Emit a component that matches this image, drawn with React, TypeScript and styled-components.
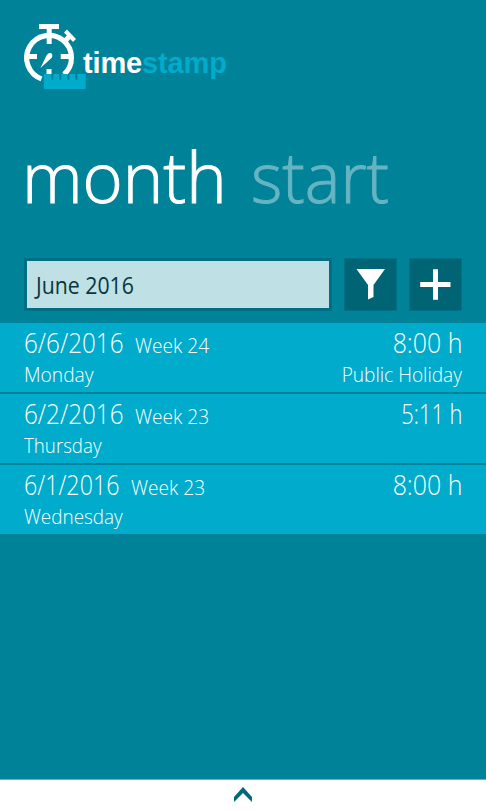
import React from "react";
import styled, { createGlobalStyle } from "styled-components";

const GlobalStyle = createGlobalStyle`
  *, *::before, *::after { box-sizing: border-box; }
  body { margin: 0; }
`;

const Screen = styled.main`
  display: flex;
  flex-direction: column;
  width: 486px;
  height: 810px;
  overflow: hidden;
  background: #008299;
  color: #fff;
  font-family: "Open Sans", "Noto Sans", sans-serif;
  font-weight: 300;
`;

/* Condensed run of text; $squeeze is the horizontal scale. */
const Text = styled.span<{ $size: number; $squeeze?: number; $weight?: number; $end?: boolean }>`
  display: block;
  white-space: pre;
  font-size: ${(p) => p.$size}px;
  font-weight: ${(p) => p.$weight ?? 300};
  transform: scaleX(${(p) => p.$squeeze ?? 1});
  transform-origin: ${(p) => (p.$end ? "right" : "left")} center;
`;

const Brand = styled.header`
  display: flex;
  height: 96px;
  padding: 20px 0 0 20px;
`;

const Wordmark = styled.div`
  margin: 26px 0 0 -7px;
  font: 700 29px/34px "Liberation Sans", sans-serif;
  letter-spacing: -0.15px;
`;

const Accent = styled.span`
  color: #00abcb;
`;

const Tabs = styled.nav`
  display: flex;
  height: 162px;
  padding: 31px 0 0 22px;
  line-height: 98px;
`;

const Tab = styled.div<{ $width: number; $muted?: boolean }>`
  width: ${(p) => p.$width}px;
  color: ${(p) => (p.$muted ? "#66b4c2" : "#fff")};
  -webkit-text-stroke: 1px currentColor;
`;

const Toolbar = styled.div`
  display: flex;
  gap: 12px;
  height: 65px;
  padding: 0 24px;
`;

const MonthField = styled.div`
  display: flex;
  align-items: center;
  width: 308px;
  height: 53px;
  padding-left: 9px;
  border: 3px solid #006f83;
  background: #bfe0e5;
  color: #08363f;
`;

const IconButton = styled.button`
  width: 53px;
  height: 53px;
  padding: 0;
  border: 1px solid #007085;
  background: #006475;

  svg { display: block; }
`;

const List = styled.div`
  display: flex;
  flex-direction: column;
  gap: 2px;
`;

const Row = styled.div`
  display: flex;
  justify-content: space-between;
  height: 69px;
  padding: 1px 24px 0;
  background: #00abcb;
`;

const Column = styled.div<{ $end?: boolean }>`
  display: flex;
  flex-direction: column;
  align-items: ${(p) => (p.$end ? "flex-end" : "flex-start")};
`;

const Line = styled.div<{ $height: number }>`
  display: flex;
  height: ${(p) => p.$height}px;
  line-height: 36px;
`;

const DateSlot = styled.div<{ $width: number }>`
  width: ${(p) => p.$width}px;
`;

const WeekSlot = styled.div`
  padding-top: 4px;
`;

const AppBar = styled.footer`
  display: flex;
  justify-content: center;
  height: 31px;
  margin-top: auto;
  border-top: 1px solid #66b4c2;
  background: #fff;
`;

const Logo = () => (
  <svg width="70" height="74" viewBox="20 20 70 74">
    <g fill="none" stroke="#fff">
      <path d="M41.500 78.900A22.400 22.400 0 1 1 64 74.500" strokeWidth="5.200" />
      <path d="M39 26.500H59M49.200 27V44" strokeWidth="5" />
      <path d="M65.500 31L74.500 40.500" strokeWidth="4" />
      <path d="M70 35.700L65.500 40.500" strokeWidth="5" />
      <path d="M29 56.500H37M60.700 56.500H70" strokeWidth="5" />
    </g>
    <path d="M50.500 53C52.500 53.500 53 56 51.500 58L40.500 68L46.500 55.500C47.800 53.300 49.500 52.700 50.500 53Z" fill="#fff" />
    <path d="M46.500 69H51.500V74H46.500Z" fill="#fff" />
    <path d="M43.700 74H51.300V80H53.300V74H59.300V80H61.300V74H67.300V80H69.300V74H75.300V80H77.300V74H85.700V89H43.700Z" fill="#00abcb" />
  </svg>
);

interface Entry {
  date: string;
  dateWidth: number;
  squeeze: number;
  week: string;
  day: string;
  daySqueeze: number;
  hours: string;
  hoursSqueeze: number;
  note?: string;
}

const entries: Entry[] = [
  { date: "6/6/2016", dateWidth: 111, squeeze: 0.865, week: "Week 24", day: "Monday", daySqueeze: 0.96, hours: "8:00 h", hoursSqueeze: 0.89, note: "Public Holiday" },
  { date: "6/2/2016", dateWidth: 111, squeeze: 0.865, week: "Week 23", day: "Thursday", daySqueeze: 0.935, hours: "5:11 h", hoursSqueeze: 0.78 },
  { date: "6/1/2016", dateWidth: 107, squeeze: 0.83, week: "Week 23", day: "Wednesday", daySqueeze: 0.945, hours: "8:00 h", hoursSqueeze: 0.89 },
];

export default function App() {
  return (
    <>
      <GlobalStyle />
      <Screen>
        <Brand>
          <Logo />
          <Wordmark>time<Accent>stamp</Accent></Wordmark>
        </Brand>
        <Tabs>
          <Tab $width={229}><Text $size={70} $squeeze={0.98}>month</Text></Tab>
          <Tab $width={150} $muted><Text $size={70} $squeeze={0.96}>start</Text></Tab>
        </Tabs>
        <Toolbar>
          <MonthField><Text $size={23} $weight={400} $squeeze={0.925}>June 2016</Text></MonthField>
          <IconButton aria-label="Filter">
            <svg width="51" height="51" viewBox="0 0 51 51"><path d="M11.500 10H40L28.500 26V38L23 40.500V26Z" fill="#fff" /></svg>
          </IconButton>
          <IconButton aria-label="Add">
            <svg width="51" height="51" viewBox="0 0 51 51"><path d="M10.200 25.500H40.500M25.500 10.200V40.800" stroke="#fff" strokeWidth="5" /></svg>
          </IconButton>
        </Toolbar>
        <List>
          {entries.map((e) => (
            <Row key={e.date}>
              <Column>
                <Line $height={33}>
                  <DateSlot $width={e.dateWidth}><Text $size={28} $squeeze={e.squeeze}>{e.date}</Text></DateSlot>
                  <WeekSlot><Text $size={20} $squeeze={0.955}>{e.week}</Text></WeekSlot>
                </Line>
                <Line $height={28}><Text $size={20} $squeeze={e.daySqueeze}>{e.day}</Text></Line>
              </Column>
              <Column $end>
                <Line $height={33}><Text $end $size={28} $squeeze={e.hoursSqueeze}>{e.hours}</Text></Line>
                {e.note && <Line $height={28}><Text $end $size={20} $squeeze={0.955}>{e.note}</Text></Line>}
              </Column>
            </Row>
          ))}
        </List>
        <AppBar>
          <svg width="20" height="30" viewBox="233 780 20 30"><path d="M234 798V802L243 793L252 802V797L243 787L234 797Z" fill="#006a7c" /></svg>
        </AppBar>
      </Screen>
    </>
  );
}
